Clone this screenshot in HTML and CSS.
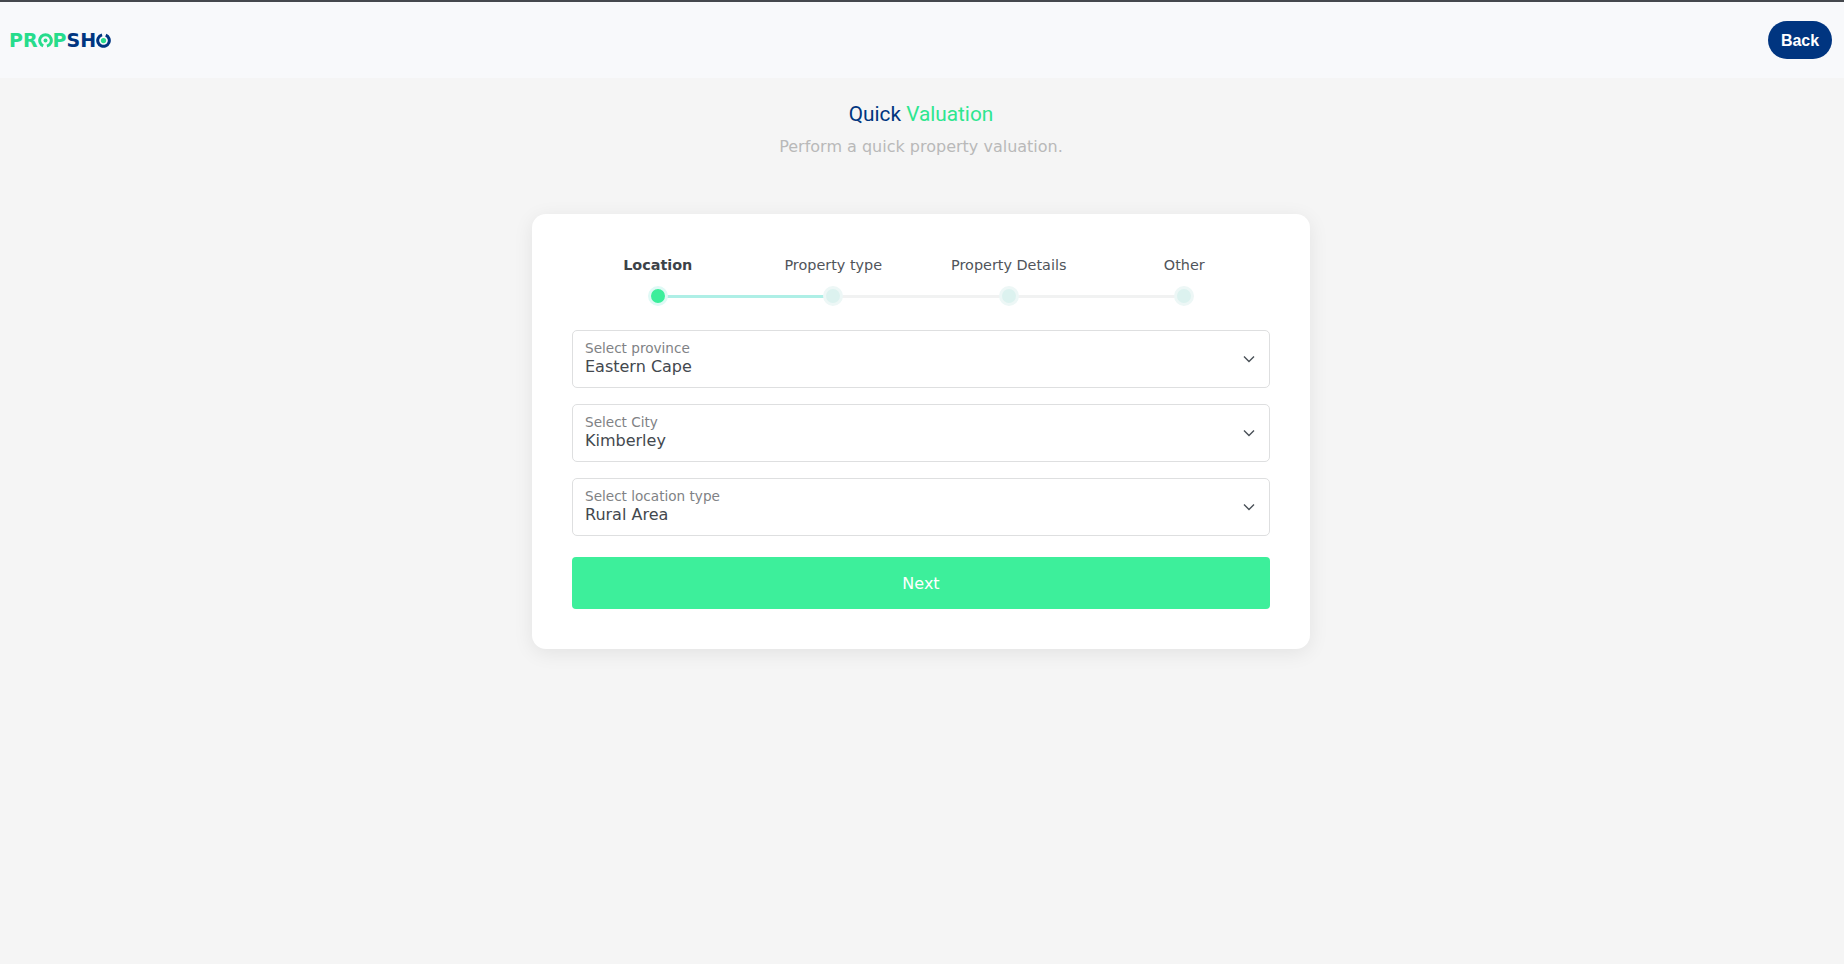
FILE: index.html
```html
<!DOCTYPE html>
<html lang="en">
<head>
    <meta charset="UTF-8">
    <meta name="viewport" content="width=device-width, initial-scale=1.0">
    <title>Quick Valuation</title>
    <link rel="stylesheet" href="styles.css">
</head>
<body>
    <header class="topbar">
        <div class="logo">
            <span class="logo-green">PR</span>
            <svg class="logo-ring" viewBox="0 0 16 16"><circle cx="8" cy="8" r="6.2" fill="none" stroke="#27dc8c" stroke-width="3.2" stroke-dasharray="34 5" transform="rotate(113 8 8)"/><circle cx="8" cy="8" r="2.1" fill="#27dc8c"/></svg>
            <span class="logo-green">P</span>
            <span class="logo-blue">SH</span>
            <svg class="logo-ring" viewBox="0 0 16 16"><circle cx="8" cy="8" r="6.2" fill="none" stroke="#003580" stroke-width="3.2" stroke-dasharray="34 5" transform="rotate(-67 8 8)"/><circle cx="8" cy="8" r="2.8" fill="#27dc8c"/></svg>
        </div>
        <button class="back-btn">Back</button>
    </header>

    <main class="page">
        <h1 class="title">Quick <span>Valuation</span></h1>
        <p class="subtitle">Perform a quick property valuation.</p>

        <div class="card">
            <div class="steps">
                <div class="step active done">
                    <span class="step-label">Location</span>
                    <span class="step-dot"></span>
                </div>
                <div class="step">
                    <span class="step-label">Property type</span>
                    <span class="step-dot"></span>
                </div>
                <div class="step">
                    <span class="step-label">Property Details</span>
                    <span class="step-dot"></span>
                </div>
                <div class="step last">
                    <span class="step-label">Other</span>
                    <span class="step-dot"></span>
                </div>
            </div>

            <form class="form">
                <div class="field">
                    <div class="field-text">
                        <span class="field-label">Select province</span>
                        <span class="field-value">Eastern Cape</span>
                    </div>
                    <svg class="chevron" viewBox="0 0 12 8"><path d="M1 1.5 6 6.5 11 1.5"/></svg>
                </div>
                <div class="field">
                    <div class="field-text">
                        <span class="field-label">Select City</span>
                        <span class="field-value">Kimberley</span>
                    </div>
                    <svg class="chevron" viewBox="0 0 12 8"><path d="M1 1.5 6 6.5 11 1.5"/></svg>
                </div>
                <div class="field">
                    <div class="field-text">
                        <span class="field-label">Select location type</span>
                        <span class="field-value">Rural Area</span>
                    </div>
                    <svg class="chevron" viewBox="0 0 12 8"><path d="M1 1.5 6 6.5 11 1.5"/></svg>
                </div>
                <button type="button" class="next-btn">Next</button>
            </form>
        </div>
    </main>
</body>
</html>
```

FILE: styles.css
```css
* {
    box-sizing: border-box;
}
body {
    margin: 0;
    min-height: 964px;
    background: #f5f5f5;
    font-family: "DejaVu Sans", sans-serif;
    color: #343a40;
}
.topbar {
    height: 78px;
    padding: 0 12px 0 9px;
    display: flex;
    align-items: center;
    justify-content: space-between;
    background: #f8f9fb;
    border-top: 2px solid #45484d;
}
.logo {
    display: flex;
    align-items: center;
    font-family: "DejaVu Sans", sans-serif;
    font-weight: bold;
    font-size: 19px;
    line-height: 16px;
}
.logo-green {
    color: #27dc8c;
}
.logo-blue {
    color: #003580;
}
.logo-ring {
    width: 15px;
    height: 15px;
}
.back-btn {
    width: 64px;
    height: 38px;
    padding: 2px 0 0;
    border: 0;
    border-radius: 19px;
    background: #003580;
    color: #fff;
    font-family: "Liberation Sans", sans-serif;
    font-size: 16px;
    font-weight: bold;
}
.page {
    padding-right: 2px;
    display: flex;
    flex-direction: column;
    align-items: center;
}
.title {
    margin: 24px 0 0;
    font-family: Roboto, sans-serif;
    font-size: 20.8px;
    line-height: 24px;
    font-weight: 400;
    color: #003580;
}
.title span {
    color: #2ee68f;
}
.subtitle {
    margin: 11px 0 0;
    font-size: 16px;
    line-height: 20px;
    color: #b9b9b9;
}
.card {
    width: 778px;
    margin-top: 57px;
    padding: 40px;
    background: #fff;
    border-radius: 14px;
    box-shadow: 0 4px 20px rgba(0, 0, 0, 0.08);
}
.steps {
    display: grid;
    grid-template-columns: repeat(4, 1fr);
    margin: 0 -2px;
}
.step {
    position: relative;
    display: flex;
    flex-direction: column;
    align-items: center;
    gap: 10px;
}
.step::after {
    content: "";
    position: absolute;
    left: 50%;
    width: 100%;
    bottom: 8px;
    height: 3px;
    background: #f1f2f2;
}
.step.done::after {
    background: #aeefe6;
}
.step.last::after {
    display: none;
}
.step-label {
    font-size: 14.4px;
    line-height: 22px;
    color: #50545a;
}
.step.active .step-label {
    font-weight: bold;
    color: #3d4248;
}
.step-dot {
    position: relative;
    z-index: 1;
    width: 20px;
    height: 20px;
    border-radius: 50%;
    background: #dcf2ef;
    border: 3px solid #edf7f6;
}
.step.active .step-dot {
    background: #3bee9b;
    border-color: #dff9f5;
}
.form {
    margin-top: 24px;
    display: flex;
    flex-direction: column;
    gap: 16px;
}
.field {
    height: 58px;
    padding: 0 12px;
    display: flex;
    align-items: center;
    justify-content: space-between;
    border: 1px solid #dedfe0;
    border-radius: 5px;
    background: #fff;
}
.field-text {
    padding-bottom: 3px;
    display: flex;
    flex-direction: column;
}
.field-label {
    font-size: 13.6px;
    line-height: 18px;
    color: #808285;
}
.field-value {
    font-size: 16px;
    line-height: 19px;
    color: #43484e;
}
.chevron {
    width: 12px;
    height: 8px;
    margin-right: 2px;
    fill: none;
    stroke: #495057;
    stroke-width: 1.4;
}
.next-btn {
    height: 52px;
    margin-top: 5px;
    border: 0;
    border-radius: 4px;
    background: #3def9b;
    color: #fff;
    font-family: "DejaVu Sans", sans-serif;
    font-size: 16px;
}
```
